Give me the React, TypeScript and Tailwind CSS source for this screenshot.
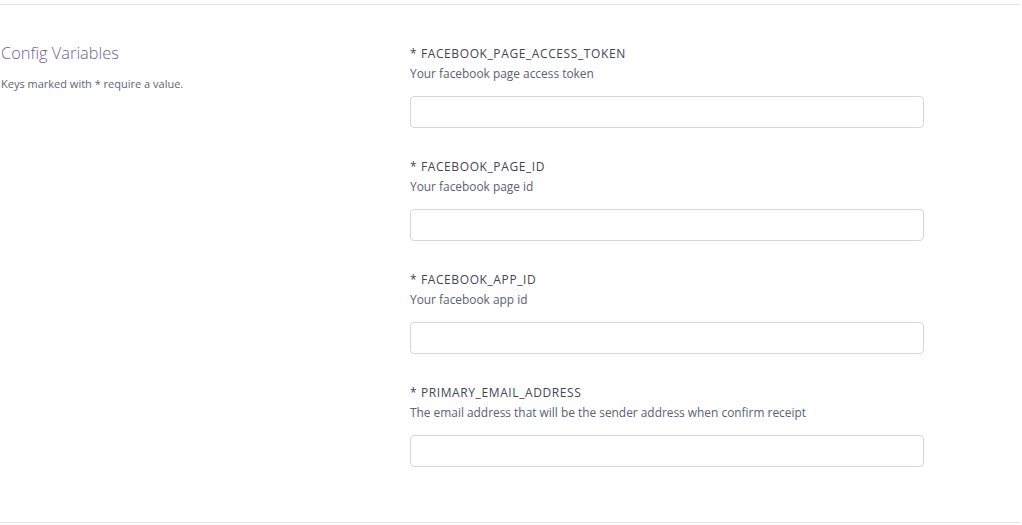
import React from 'react';

const fields = [
  { key: 'FACEBOOK_PAGE_ACCESS_TOKEN', hint: 'Your facebook page access token' },
  { key: 'FACEBOOK_PAGE_ID', hint: 'Your facebook page id' },
  { key: 'FACEBOOK_APP_ID', hint: 'Your facebook app id' },
  { key: 'PRIMARY_EMAIL_ADDRESS', hint: 'The email address that will be the sender address when confirm receipt' },
];

const App = () => {
  return (
    <div className="w-[1022px] h-[525px] bg-white pt-1 font-['Open_Sans',sans-serif]">
      <div className="w-[1020px] flex border-t border-b border-[#e6e6e9] pt-[39px] pb-[55px]">
        <div className="w-[410px] pl-px">
          <h2 className="text-[16.4px] leading-6 font-light text-[#6f6296] mt-[-3px]">Config Variables</h2>
          <p className="mt-[11px] text-[11px] leading-4 text-[#5c6577]">Keys marked with * require a value.</p>
        </div>
        <div className="w-[514px] flex flex-col gap-[29px]">
          {fields.map((f) => (
            <div key={f.key} className="flex flex-col">
              <label className="text-[12px] leading-5 font-medium tracking-[0.6px] text-[#3f4656]">* {f.key}</label>
              <span className="-mt-px text-[11.9px] leading-5 text-[#596275]">{f.hint}</span>
              <input
                type="text"
                className="mt-[13px] h-8 w-full rounded border border-[#d3d6e0] bg-white outline-none"
              />
            </div>
          ))}
        </div>
      </div>
    </div>
  );
};

export default App;
